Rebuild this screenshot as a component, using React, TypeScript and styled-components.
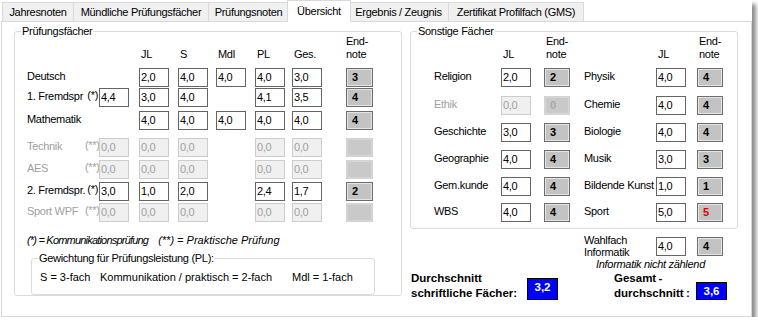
import React from "react";
import styled, { createGlobalStyle } from "styled-components";

const GlobalStyle = createGlobalStyle`
  html, body { margin: 0; background: #fff; }
  body {
    font-family: "Liberation Sans", Arial, sans-serif;
    font-size: 11px;
    color: #000;
    letter-spacing: -0.3px;
  }
  * { box-sizing: border-box; }
`;

const Window = styled.div`
  width: 751px;
  height: 317px;
  margin-left: 1px;
  display: flex;
  flex-direction: column;
  background: #fff;
  box-shadow: 4px 4px 4px rgba(0, 0, 0, 0.45);
`;

const TabStrip = styled.div`
  display: flex;
  align-items: flex-end;
  height: 21px;
  padding-left: 1px;
  position: relative;
  z-index: 1;
`;

const Tab = styled.div<{ $w: number; $active?: boolean }>`
  width: ${p => p.$w}px;
  height: ${p => (p.$active ? 22 : 19)}px;
  margin: 0 ${p => (p.$active ? -2 : 0)}px ${p => (p.$active ? -1 : 0)}px ${p => (p.$active ? -2 : -1)}px;
  padding-top: ${p => (p.$active ? 4 : 3)}px;
  border: 1px solid #d9d9d9;
  border-bottom: none;
  background: ${p => (p.$active ? "#fff" : "#f0f0f0")};
  line-height: 13px;
  text-align: center;
  white-space: nowrap;
  position: relative;
  z-index: ${p => (p.$active ? 1 : 0)};
  &:first-child { margin-left: 0; }
`;

const Panel = styled.div`
  flex: 1;
  display: flex;
  align-items: flex-start;
  gap: 8px;
  padding: 3px 0 0 12px;
  border: 1px solid #d9d9d9;
  background: #fff;
`;

const Group = styled.fieldset<{ $w: number; $h: number }>`
  margin: 0;
  padding: 0;
  min-width: 0;
  width: ${p => p.$w}px;
  height: ${p => p.$h}px;
  border: 1px solid #dcdcdc;
  border-radius: 3px;
`;

const Caption = styled.legend`
  margin-left: 6px;
  padding: 0 1px;
  line-height: 13px;
`;

const GroupBody = styled.div<{ $pad: number }>`
  padding-left: ${p => p.$pad}px;
`;

const GradeRow = styled.div<{ $cols: string; $top: number; $h?: number; $head?: boolean }>`
  display: grid;
  grid-template-columns: ${p => p.$cols};
  align-items: ${p => (p.$head ? "end" : "center")};
  height: ${p => p.$h ?? 19}px;
  margin-top: ${p => p.$top}px;
`;

const HeadCell = styled.div<{ $pad?: number }>`
  padding-left: ${p => p.$pad ?? 2}px;
  line-height: 13px;
`;

const RowLabel = styled.div<{ $off?: boolean }>`
  color: ${p => (p.$off ? "#a0a0a0" : "#000")};
  margin-top: -3px;
  white-space: nowrap;
  line-height: 13px;
`;

const Mark = styled.div<{ $off?: boolean }>`
  color: ${p => (p.$off ? "#a0a0a0" : "#000")};
  text-align: right;
  padding-right: 1px;
  margin-top: -4px;
  white-space: nowrap;
  line-height: 13px;
`;

const Field = styled.div<{ $off?: boolean }>`
  width: 30px;
  height: 19px;
  padding-left: 1px;
  line-height: 17px;
  border: 1px solid ${p => (p.$off ? "#cccccc" : "#646464")};
  background: ${p => (p.$off ? "#f0f0f0" : "#fff")};
  color: ${p => (p.$off ? "#a0a0a0" : "#000")};
`;

const Grade = styled.div<{ $w: number; $off?: boolean; $red?: boolean }>`
  width: ${p => p.$w}px;
  height: 19px;
  padding-left: 5px;
  line-height: 17px;
  font-weight: bold;
  letter-spacing: 0;
  border: 1px solid ${p => (p.$off ? "#d2d2d2" : "#6d6d6d")};
  background: ${p => (p.$off ? "#c9c9c9" : "#c3c3c3")};
  box-shadow: inset 0 0 0 1px ${p => (p.$off ? "#d6d6d6" : "#e4e4e4")};
  color: ${p => (p.$red ? "#e00000" : p.$off ? "#a8a8a8" : "#000")};
`;

const Footnote = styled.div`
  display: flex;
  gap: 10px;
  margin-top: 12px;
  font-style: italic;
  line-height: 13px;
  white-space: nowrap;
`;

const FootPart = styled.span<{ $ls: number }>`
  letter-spacing: ${p => p.$ls}px;
`;

const WeightText = styled.div`
  display: grid;
  grid-template-columns: 60px 192px auto;
  padding: 6px 0 0 8px;
  line-height: 13px;
  letter-spacing: 0;
  white-space: nowrap;
`;

const SideColumn = styled.div`
  display: flex;
  flex-direction: column;
  width: 328px;
`;

const BottomArea = styled.div`
  display: flex;
  align-items: flex-end;
`;

const AvgBlock = styled.div<{ $w: number; $pad: number }>`
  display: flex;
  align-items: flex-end;
  width: ${p => p.$w}px;
  padding-left: ${p => p.$pad}px;
`;

const AvgLabel = styled.div<{ $w: number }>`
  width: ${p => p.$w}px;
  font-size: 11.5px;
  font-weight: bold;
  line-height: 15px;
  letter-spacing: 0;
  white-space: nowrap;
`;

const BlueBox = styled.div<{ $h: number }>`
  width: 31px;
  height: ${p => p.$h}px;
  margin-bottom: 1px;
  padding-top: 1px;
  border: 1px solid #000;
  background: #0000ff;
  color: #fffff0;
  font-weight: bold;
  font-size: 11.5px;
  letter-spacing: 0;
  line-height: 14px;
  text-align: center;
`;

const ElectiveColumn = styled.div`
  display: flex;
  flex-direction: column;
  width: 154px;
`;

const ElectiveRow = styled.div`
  display: grid;
  grid-template-columns: 72px 41px 26px;
  align-items: center;
  height: 24px;
  margin-top: 5px;
`;

const TwoLine = styled.div`
  line-height: 12px;
`;

const Note = styled.div`
  padding-left: 12px;
  font-style: italic;
  line-height: 13px;
  white-space: nowrap;
`;

type Exam = {
  name: string;
  mark?: string;
  off?: boolean;
  top: number;
  extra?: string;
  jl: string;
  s: string;
  mdl?: string;
  pl: string;
  ges: string;
  end: string;
};

const exams: Exam[] = [
  { name: "Deutsch", top: 7, jl: "2,0", s: "4,0", mdl: "4,0", pl: "4,0", ges: "3,0", end: "3" },
  { name: "1. Fremdspr", mark: "(*)", top: 1, extra: "4,4", jl: "3,0", s: "4,0", pl: "4,1", ges: "3,5", end: "4" },
  { name: "Mathematik", top: 4, jl: "4,0", s: "4,0", mdl: "4,0", pl: "4,0", ges: "4,0", end: "4" },
  { name: "Technik", mark: "(**)", off: true, top: 8, extra: "0,0", jl: "0,0", s: "0,0", pl: "0,0", ges: "0,0", end: "" },
  { name: "AES", mark: "(**)", off: true, top: 3, extra: "0,0", jl: "0,0", s: "0,0", pl: "0,0", ges: "0,0", end: "" },
  { name: "2. Fremdspr.", mark: "(*)", top: 3, extra: "3,0", jl: "1,0", s: "2,0", pl: "2,4", ges: "1,7", end: "2" },
  { name: "Sport WPF", mark: "(**)", off: true, top: 2, extra: "0,0", jl: "0,0", s: "0,0", pl: "0,0", ges: "0,0", end: "" },
];

type Subject = { name: string; jl: string; end: string; off?: boolean; red?: boolean };

const others: { top: number; a: Subject; b: Subject }[] = [
  { top: 7, a: { name: "Religion", jl: "2,0", end: "2" }, b: { name: "Physik", jl: "4,0", end: "4" } },
  { top: 9, a: { name: "Ethik", jl: "0,0", end: "0", off: true }, b: { name: "Chemie", jl: "4,0", end: "4" } },
  { top: 8, a: { name: "Geschichte", jl: "3,0", end: "3" }, b: { name: "Biologie", jl: "4,0", end: "4" } },
  { top: 8, a: { name: "Geographie", jl: "4,0", end: "4" }, b: { name: "Musik", jl: "3,0", end: "3" } },
  { top: 8, a: { name: "Gem.kunde", jl: "4,0", end: "4" }, b: { name: "Bildende Kunst", jl: "1,0", end: "1" } },
  { top: 7, a: { name: "WBS", jl: "4,0", end: "4" }, b: { name: "Sport", jl: "5,0", end: "5", red: true } },
];

const examCols = "58px 14px 40px 39px 38px 39px 37px 54px 27px";
const otherCols = "67px 43px 40px 72px 41px 26px";

const tabs = [
  { label: "Jahresnoten", w: 72 },
  { label: "Mündliche Prüfungsfächer", w: 136 },
  { label: "Prüfungsnoten", w: 81 },
  { label: "Übersicht", w: 64, active: true },
  { label: "Ergebnis / Zeugnis", w: 101 },
  { label: "Zertifikat Profilfach (GMS)", w: 136 },
];

const SubjectCells: React.FC<{ s: Subject }> = ({ s }) => (
  <>
    <RowLabel $off={s.off}>{s.name}</RowLabel>
    <Field $off={s.off}>{s.jl}</Field>
    <Grade $w={26} $off={s.off} $red={s.red}>{s.end}</Grade>
  </>
);

export default function App() {
  return (
    <>
      <GlobalStyle />
      <Window>
        <TabStrip>
          {tabs.map(t => (
            <Tab key={t.label} $w={t.w} $active={t.active}>{t.label}</Tab>
          ))}
        </TabStrip>
        <Panel>
          <Group $w={388} $h={271}>
            <Caption>Prüfungsfächer</Caption>
            <GroupBody $pad={12}>
              <GradeRow $cols={examCols} $top={-3} $h={26} $head>
                <div />
                <div />
                <div />
                <HeadCell>JL</HeadCell>
                <HeadCell>S</HeadCell>
                <HeadCell>Mdl</HeadCell>
                <HeadCell>PL</HeadCell>
                <HeadCell>Ges.</HeadCell>
                <HeadCell $pad={0}>End-<br />note</HeadCell>
              </GradeRow>
              {exams.map(e => (
                <GradeRow key={e.name} $cols={examCols} $top={e.top}>
                  <RowLabel $off={e.off}>{e.name}</RowLabel>
                  <Mark $off={e.off}>{e.mark}</Mark>
                  {e.extra ? <Field $off={e.off}>{e.extra}</Field> : <div />}
                  <Field $off={e.off}>{e.jl}</Field>
                  <Field $off={e.off}>{e.s}</Field>
                  {e.mdl ? <Field $off={e.off}>{e.mdl}</Field> : <div />}
                  <Field $off={e.off}>{e.pl}</Field>
                  <Field $off={e.off}>{e.ges}</Field>
                  <Grade $w={27} $off={e.off}>{e.end}</Grade>
                </GradeRow>
              ))}
              <Footnote>
                <FootPart $ls={-0.8}>(*) = Kommunikationsprüfung</FootPart>
                <FootPart $ls={0}>(**) = Praktische Prüfung</FootPart>
              </Footnote>
              <Group $w={344} $h={43} style={{ marginTop: 5, marginLeft: 4 }}>
                <Caption>Gewichtung für Prüfungsleistung (PL):</Caption>
                <WeightText>
                  <span>S = 3-fach</span>
                  <span>Kommunikation / praktisch = 2-fach</span>
                  <span>Mdl = 1-fach</span>
                </WeightText>
              </Group>
            </GroupBody>
          </Group>

          <SideColumn>
            <Group $w={328} $h={204}>
              <Caption>Sonstige Fächer</Caption>
              <GroupBody $pad={23}>
                <GradeRow $cols={otherCols} $top={-3} $h={26} $head>
                  <div />
                  <HeadCell>JL</HeadCell>
                  <HeadCell>End-<br />note</HeadCell>
                  <div />
                  <HeadCell>JL</HeadCell>
                  <HeadCell>End-<br />note</HeadCell>
                </GradeRow>
                {others.map(r => (
                  <GradeRow key={r.a.name} $cols={otherCols} $top={r.top}>
                    <SubjectCells s={r.a} />
                    <SubjectCells s={r.b} />
                  </GradeRow>
                ))}
              </GroupBody>
            </Group>

            <BottomArea>
              <AvgBlock $w={174} $pad={1}>
                <AvgLabel $w={116}>Durchschnitt<br />schriftliche Fächer:</AvgLabel>
                <BlueBox $h={22}>3,2</BlueBox>
              </AvgBlock>
              <ElectiveColumn>
                <ElectiveRow>
                  <TwoLine>Wahlfach<br />Informatik</TwoLine>
                  <Field>4,0</Field>
                  <Grade $w={26}>4</Grade>
                </ElectiveRow>
                <Note>Informatik nicht zählend</Note>
                <AvgBlock $w={154} $pad={30}>
                  <AvgLabel $w={82}>Gesamt&#8201;-<br />durchschnitt&#8201;:</AvgLabel>
                  <BlueBox $h={18}>3,6</BlueBox>
                </AvgBlock>
              </ElectiveColumn>
            </BottomArea>
          </SideColumn>
        </Panel>
      </Window>
    </>
  );
}
